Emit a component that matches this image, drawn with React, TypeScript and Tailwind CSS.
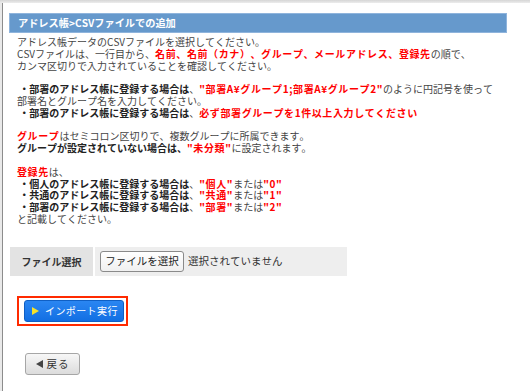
import React from "react";

const Red = ({ children }: { children: React.ReactNode }) => (
  <span className="font-bold tracking-[0.6px] text-[#ff0000]">{children}</span>
);

const B = ({ children }: { children: React.ReactNode }) => (
  <span className="font-bold text-[#222]">{children}</span>
);

export default function App() {
  return (
    <div className="min-h-[391px] w-[530px] bg-[#e9e9e9] font-['Noto_Sans_CJK_JP',sans-serif] [font-kerning:none] [text-spacing-trim:space-all]">
      <div className="h-[3px] bg-gradient-to-b from-[#d6d6d6] to-[#ececec]" />
      <div className="ml-[2px] min-h-[388px] border-l border-[#8c8c8c] bg-white pr-[23px] pl-[6px] pt-[10px]">
        {/* title bar */}
        <div className="flex h-[20px] items-center border border-[#8fb4dc] bg-[#6699cc] pl-[8px] text-[10.2px] font-bold text-white">
          アドレス帳&gt;CSVファイルでの追加
        </div>

        {/* description */}
        <div className="mt-[3px] pl-[8px] text-[10px] leading-[11.8px] text-[#444]">
          <div>アドレス帳データのCSVファイルを選択してください。</div>
          <div>
            CSVファイルは、一行目から、<Red>名前、名前（カナ）、グループ、メールアドレス、登録先</Red>の順で、
          </div>
          <div>カンマ区切りで入力されていることを確認してください。</div>
          <div>&nbsp;</div>
          <div>
            &nbsp;<B>・部署のアドレス帳に登録する場合は</B>、<Red>"部署A¥グループ1;部署A¥グループ2"</Red>のように円記号を使って
          </div>
          <div>部署名とグループ名を入力してください。</div>
          <div>
            &nbsp;<B>・部署のアドレス帳に登録する場合は</B>、<Red>必ず部署グループを1件以上入力してください</Red>
          </div>
          <div>&nbsp;</div>
          <div>
            <Red>グループ</Red>はセミコロン区切りで、複数グループに所属できます。
          </div>
          <div>
            <B>グループが設定されていない場合は、</B><Red>"未分類"</Red>に設定されます。
          </div>
          <div>&nbsp;</div>
          <div>
            <Red>登録先</Red>は、
          </div>
          <div>
            &nbsp;<B>・個人のアドレス帳に登録する場合は</B>、<Red>"個人"</Red>または<Red>"0"</Red>
          </div>
          <div>
            &nbsp;<B>・共通のアドレス帳に登録する場合は</B>、<Red>"共通"</Red>または<Red>"1"</Red>
          </div>
          <div>
            &nbsp;<B>・部署のアドレス帳に登録する場合は</B>、<Red>"部署"</Red>または<Red>"2"</Red>
          </div>
          <div>と記載してください。</div>
        </div>

        {/* file select row */}
        <div className="mt-[22px] ml-[1px] flex h-[29px] w-[337px] gap-[2px] text-[10px]">
          <div className="flex w-[83px] items-center justify-center bg-[#e3e3e3] font-bold text-[#333]">
            ファイル選択
          </div>
          <div className="flex flex-1 items-center bg-[#eeeeee] pl-[5px] text-[#333]">
            <button className="h-[21px] w-[84px] rounded-[3px] border border-[#8a8a8a] bg-gradient-to-b from-white to-[#f0f0f0] text-[10.5px] whitespace-nowrap text-[#222]">
              ファイルを選択
            </button>
            <span className="ml-[4px] text-[10.5px]">選択されていません</span>
          </div>
        </div>

        {/* import button */}
        <div className="mt-[20px] ml-[8px] inline-flex border-2 border-[#ff2a00] py-[2px] pr-[2px] pl-[5px]">
          <button className="flex h-[22px] w-[100px] items-center gap-[6px] rounded-[3px] border border-[#0f5fc4] bg-gradient-to-b from-[#2a86f2] to-[#116fe3] pl-[7px] text-[10px] whitespace-nowrap text-white">
            <svg width="7" height="8" viewBox="0 0 7 8">
              <path d="M0 0 L7 4 L0 8 Z" fill="#f5e12b" />
            </svg>
            <span className="tracking-[0.4px]">インポート実行</span>
          </button>
        </div>

        {/* back button */}
        <div className="mt-[27px] ml-[16px]">
          <button className="flex h-[22px] w-[55px] items-center justify-center gap-[4px] rounded-[3px] border border-[#a6a6a6] bg-gradient-to-b from-[#f7f7f7] to-[#dcdcdc] text-[10.5px] text-[#333]">
            <svg width="7" height="8" viewBox="0 0 7 8">
              <path d="M7 0 L0 4 L7 8 Z" fill="#444" />
            </svg>
            <span className="tracking-[1px]">戻る</span>
          </button>
        </div>
      </div>
    </div>
  );
}
